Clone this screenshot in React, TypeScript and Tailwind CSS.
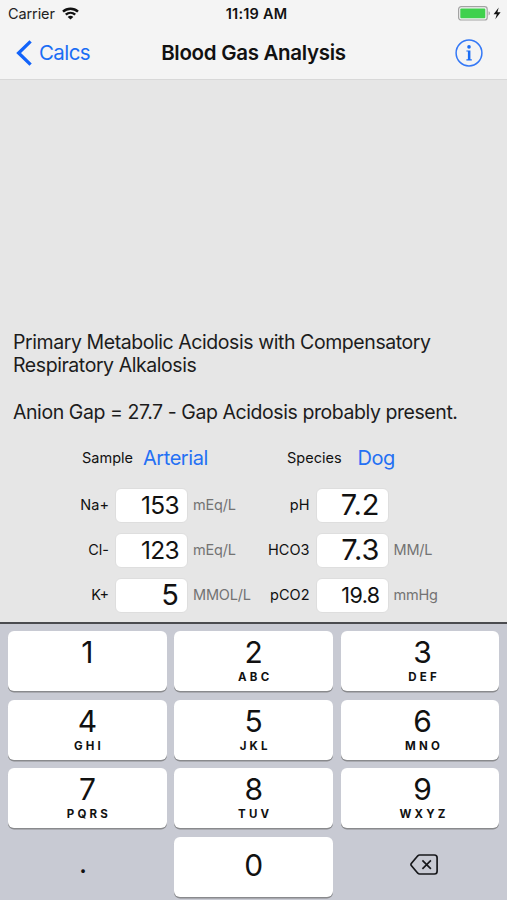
import clsx from "clsx";

type Field = {
  label: string;
  value: string;
  unit: string;
  size: string;
};

const leftFields: Field[] = [
  { label: "Na+", value: "153", unit: "mEq/L", size: "text-[24.5px] tracking-[-0.7px]" },
  { label: "Cl-", value: "123", unit: "mEq/L", size: "text-[24.5px] tracking-[-0.7px]" },
  { label: "K+", value: "5", unit: "MMOL/L", size: "text-[29px]" },
];

const rightFields: Field[] = [
  { label: "pH", value: "7.2", unit: "", size: "text-[29px]" },
  { label: "HCO3", value: "7.3", unit: "MM/L", size: "text-[29px]" },
  { label: "pCO2", value: "19.8", unit: "mmHg", size: "text-[21.5px] tracking-[-0.6px]" },
];

const keys = [
  { digit: "1", letters: "" },
  { digit: "2", letters: "ABC" },
  { digit: "3", letters: "DEF" },
  { digit: "4", letters: "GHI" },
  { digit: "5", letters: "JKL" },
  { digit: "6", letters: "MNO" },
  { digit: "7", letters: "PQRS" },
  { digit: "8", letters: "TUV" },
  { digit: "9", letters: "WXYZ" },
];

function WifiIcon() {
  return (
    <svg width="17" height="13" viewBox="0 0 17 13" fill="none" stroke="#111" strokeWidth="2.4">
      <path d="M1 4.7C5.2 0.7 11.8 0.7 16 4.7" />
      <path d="M3.8 7.7C6.5 5.2 10.5 5.2 13.2 7.7" />
      <path d="M8.5 12.6L5.7 9.9C7.3 8.5 9.7 8.5 11.3 9.9Z" fill="#111" stroke="none" />
    </svg>
  );
}

function BatteryIcon() {
  return (
    <svg width="44" height="15" viewBox="0 0 44 15" fill="none">
      <rect x="0.6" y="0.6" width="28.6" height="13.4" rx="2.6" stroke="#a3a3a3" strokeWidth="1.2" />
      <rect x="2.3" y="2.4" width="25" height="9.8" rx="1" fill="#3fd14d" />
      <path d="M30.6 5.2C32.4 5.8 32.4 8.8 30.6 9.4Z" fill="#a3a3a3" />
      <path d="M40.7 1.6L35.6 8.3H38.8L37.3 13.2L42.6 6.3H39.4Z" fill="#111" />
    </svg>
  );
}

function StatusBar() {
  return (
    <div className="grid h-[27px] grid-cols-3 items-center pr-[5px] pl-2">
      <div className="flex items-center gap-[7px]">
        <span className="text-[14.5px] tracking-[-0.1px] text-[#222]">Carrier</span>
        <WifiIcon />
      </div>
      <div className="pl-[3px] text-center text-[14.5px] font-semibold tracking-[0.2px] whitespace-nowrap">11:19 AM</div>
      <div className="flex justify-end">
        <BatteryIcon />
      </div>
    </div>
  );
}

function NavBar() {
  return (
    <div className="grid h-[52px] grid-cols-[110px_1fr_102px] items-center pr-6 pl-4">
      <button className="flex items-center gap-[7px] text-[#1a6df5]">
        <svg width="16" height="26" viewBox="0 0 16 26" fill="none" stroke="#1263fa" strokeWidth="3.3">
          <path d="M14.6 1.4L2.6 13L14.6 24.6" />
        </svg>
        <span className="text-[20.5px] tracking-[-0.6px]">Calcs</span>
      </button>
      <h1 className="text-center text-[20.5px] font-semibold tracking-[-0.3px] whitespace-nowrap">Blood Gas Analysis</h1>
      <button className="flex justify-end">
        <svg width="28" height="28" viewBox="0 0 28 28" fill="none">
          <circle cx="14" cy="14" r="12.9" stroke="#3478f6" strokeWidth="1.5" />
          <circle cx="14" cy="7.9" r="1.8" fill="#1a6df5" />
          <path d="M11.4 11.4H15.4V20.2H16.8V21.4H11.4V20.2H12.9V12.6H11.4Z" fill="#1a6df5" />
        </svg>
      </button>
    </div>
  );
}

function FieldRow({ field }: { field: Field }) {
  return (
    <div className="flex h-[34px] items-center">
      <span className="w-[49px] shrink-0 text-right text-[14.5px]">{field.label}</span>
      <div
        className={clsx(
          "mr-[5px] ml-[6px] flex h-[35px] w-[73px] shrink-0 items-center justify-end rounded-[6px] border border-[#dedede] bg-white pr-2",
          field.size
        )}
      >
        {field.value}
      </div>
      <span className="text-[14.5px] tracking-[-0.2px] text-[#737373]">{field.unit}</span>
    </div>
  );
}

function Keypad() {
  const keyStyle = "flex flex-col items-center rounded-[6px] bg-white shadow-[0_1.4px_0_#898a8d]";

  return (
    <div className="grid h-[278px] grid-cols-3 grid-rows-[repeat(4,60px)] gap-x-[7.5px] gap-y-[8.5px] border-t-2 border-[#4a4b4f] bg-[#c8cad3] pt-[7px] pr-[7.5px] pl-2">
      {keys.map((key, i) => (
        <button key={key.digit} className={clsx(keyStyle, i % 3 === 2 && "pl-[5px]")}>
          <span className="mt-[3px] text-[30px] leading-9">{key.digit}</span>
          <span className="mt-px -mr-[3px] text-[11.5px] leading-3 font-bold tracking-[3.2px]">{key.letters}</span>
        </button>
      ))}
      <button className="flex items-center justify-center pr-[9px] pb-2 text-[28px]">.</button>
      <button className={keyStyle}>
        <span className="mt-[10px] text-[30px] leading-9">0</span>
      </button>
      <button className="flex items-center justify-center pb-[4px] pl-[7px]">
        <svg width="28" height="21" viewBox="0 0 28 21" fill="none" stroke="#17181b" strokeWidth="1.7">
          <path d="M9.6 1H24.4Q27.1 1 27.1 3.7V17.3Q27.1 20 24.4 20H9.6Q8.6 20 7.8 19.2L1.3 11.6Q0.6 10.5 1.3 9.4L7.8 1.8Q8.6 1 9.6 1Z" />
          <path d="M12.4 6.4L20.9 14.8M20.9 6.4L12.4 14.8" />
        </svg>
      </button>
    </div>
  );
}

export default function App() {
  return (
    <div className="flex h-[900px] w-[507px] flex-col overflow-hidden bg-[#e6e6e6] font-['Inter',sans-serif] text-[#111]">
      <header className="h-20 shrink-0 border-b border-[#d8d8d8] bg-[#f4f4f4]">
        <StatusBar />
        <NavBar />
      </header>

      <main className="flex flex-1 flex-col justify-end pb-[10px]">
        <div className="px-[13px] text-[19.5px] leading-[23.2px] tracking-[-0.43px] whitespace-nowrap text-[#1c1c1c]">
          <p>Primary Metabolic Acidosis with Compensatory</p>
          <p>Respiratory Alkalosis</p>
          <p className="mt-[23.2px]">Anion Gap = 27.7 - Gap Acidosis probably present.</p>
        </div>

        <div className="mt-[19px] flex h-[30px] items-center">
          <div className="flex w-[272px] items-center gap-[10px] pl-[82px]">
            <span className="text-[14.5px]">Sample</span>
            <button className="text-[20px] tracking-[-0.45px] text-[#2470f4]">Arterial</button>
          </div>
          <div className="flex items-center gap-4 pl-[15px]">
            <span className="text-[14.5px]">Species</span>
            <button className="text-[20px] tracking-[-0.45px] text-[#2470f4]">Dog</button>
          </div>
        </div>

        <div className="mt-[15px] flex">
          <div className="flex w-[200px] flex-col gap-[11px] pl-[60px]">
            {leftFields.map((field) => (
              <FieldRow key={field.label} field={field} />
            ))}
          </div>
          <div className="flex flex-col gap-[11px] pl-[60.5px]">
            {rightFields.map((field) => (
              <FieldRow key={field.label} field={field} />
            ))}
          </div>
        </div>
      </main>

      <Keypad />
    </div>
  );
}
